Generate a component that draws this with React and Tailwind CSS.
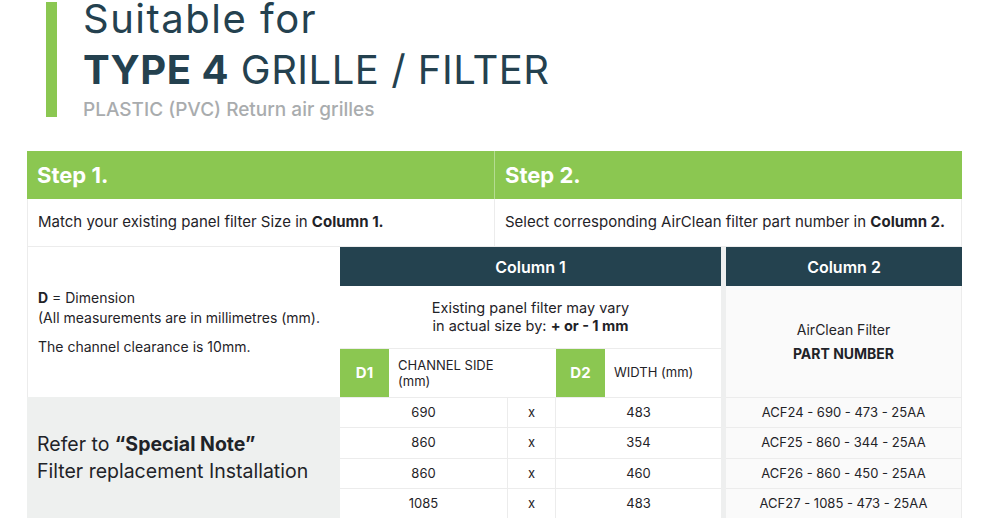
import React from 'react';

const rows = [
  { d1: '690', d2: '483', part: 'ACF24 - 690 - 473 - 25AA' },
  { d1: '860', d2: '354', part: 'ACF25 - 860 - 344 - 25AA' },
  { d1: '860', d2: '460', part: 'ACF26 - 860 - 450 - 25AA' },
  { d1: '1085', d2: '483', part: 'ACF27 - 1085 - 473 - 25AA' },
];

const rowStarts = ['row-start-4', 'row-start-5', 'row-start-6', 'row-start-7'];

const App = () => {
  return (
    <div className="w-[988px] h-[526px] bg-white overflow-hidden font-['Inter',sans-serif] text-[#1f2328]">
      {/* title */}
      <div className="flex items-start pl-[46px] gap-[26px]">
        <div className="mt-[2px] w-[11px] h-[115px] bg-[#8bc751]" />
        <div className="text-[#24414f]">
          <div className="text-[40px] leading-[38px] tracking-[1.5px]">Suitable for</div>
          <div className="mt-[16px] text-[40px] leading-[32px] tracking-[0.5px]">
            <span className="font-bold">TYPE 4</span> GRILLE / FILTER
          </div>
          <div className="mt-[12px] text-[19px] leading-[24px] font-medium text-[#a9acae]">
            PLASTIC (PVC) Return air grilles
          </div>
        </div>
      </div>

      <div className="ml-[27px] mt-[29px] w-[935px]">
        {/* steps */}
        <div className="grid grid-cols-[467px_468px]">
          <div className="h-[48px] bg-[#8bc751] flex items-center pl-[10px] text-white font-bold text-[22px]">Step 1.</div>
          <div className="h-[48px] bg-[#8bc751] border-l border-[#b5dc92] flex items-center pl-[10px] text-white font-bold text-[22px]">Step 2.</div>
          <div className="h-[48px] bg-white border-l border-b border-[#ececec] flex items-center pl-[10px] text-[15px]">
            <span>Match your existing panel filter Size in <b className="font-bold">Column 1.</b></span>
          </div>
          <div className="h-[48px] bg-white border-l border-r border-b border-[#ececec] flex items-center pl-[10px] text-[15px]">
            <span>Select corresponding AirClean filter part number in <b className="font-bold">Column 2.</b></span>
          </div>
        </div>

        {/* columns */}
        <div className="grid grid-cols-[313px_49px_118px_49px_49px_116px_5px_236px] grid-rows-[39px_63px_48px_30px_31px_30px_30px]">
          <div className="col-start-1 row-start-1 row-span-3 bg-white border-l border-[#ececec] flex flex-col justify-center pl-[10px] text-[14px] leading-[20px]">
            <div><b className="font-bold">D</b> = Dimension</div>
            <div>(All measurements are in millimetres (mm).</div>
            <div className="mt-[9px]">The channel clearance is 10mm.</div>
          </div>

          <div className="col-start-2 col-span-5 row-start-1 bg-[#24424f] flex items-center justify-center text-white font-semibold text-[16px]">Column 1</div>
          <div className="col-start-7 row-start-1 row-span-7 bg-[#eeefef]" />
          <div className="col-start-8 row-start-1 bg-[#24424f] flex items-center justify-center text-white font-semibold text-[16px]">Column 2</div>

          <div className="col-start-2 col-span-5 row-start-2 border-b border-[#ececec] flex flex-col items-center justify-center text-[14.5px] leading-[18px]">
            <div>Existing panel filter may vary</div>
            <div>in actual size by: <b className="font-bold">+ or - 1 mm</b></div>
          </div>
          <div className="col-start-8 row-start-2 row-span-2 bg-[#fafafa] border-r border-[#ececec] flex flex-col items-center justify-center text-[14px] leading-[24px]">
            <div>AirClean Filter</div>
            <div className="font-bold">PART NUMBER</div>
          </div>

          <div className="col-start-2 row-start-3 bg-[#8bc751] flex items-center justify-center text-white font-bold text-[15px]">D1</div>
          <div className="col-start-3 col-span-2 row-start-3 flex flex-col justify-center pl-[9px] text-[13px] leading-[16px]">
            <div>CHANNEL SIDE</div>
            <div>(mm)</div>
          </div>
          <div className="col-start-5 row-start-3 bg-[#8bc751] flex items-center justify-center text-white font-bold text-[15px]">D2</div>
          <div className="col-start-6 row-start-3 flex items-center pl-[9px] text-[13px]">WIDTH (mm)</div>

          <div className="col-start-1 row-start-4 row-span-4 bg-[#eef0ef] flex flex-col justify-center pl-[10px] text-[19.5px] leading-[27px]">
            <div>Refer to <b className="font-bold">“Special Note”</b></div>
            <div>Filter replacement Installation</div>
          </div>

          {rows.map((r, i) => (
            <React.Fragment key={i}>
              <div className={`${rowStarts[i]} col-start-2 col-span-2 border-t border-[#ececec] flex items-center justify-center text-[13px]`}>{r.d1}</div>
              <div className={`${rowStarts[i]} col-start-4 border-t border-l border-r border-[#ececec] flex items-center justify-center text-[13px]`}>x</div>
              <div className={`${rowStarts[i]} col-start-5 col-span-2 border-t border-[#ececec] flex items-center justify-center text-[13px]`}>{r.d2}</div>
              <div className={`${rowStarts[i]} col-start-8 bg-[#fafafa] border-t border-r border-[#ececec] flex items-center justify-center text-[13px]`}>{r.part}</div>
            </React.Fragment>
          ))}
        </div>
      </div>
    </div>
  );
};

export default App;
